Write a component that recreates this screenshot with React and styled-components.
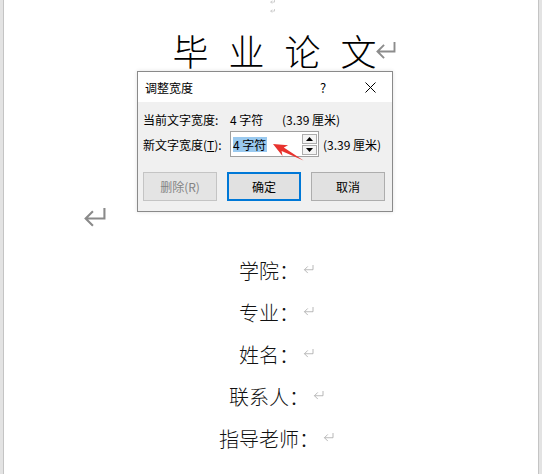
import React from 'react';
import styled, { createGlobalStyle } from 'styled-components';

const GlobalStyle = createGlobalStyle`
  html, body {
    margin: 0;
    padding: 0;
    background: #ffffff;
  }
  body {
    font-family: "Noto Sans CJK SC", "Liberation Sans", sans-serif;
  }
`;

const Window = styled.div`
  position: relative;
  display: flex;
  width: 542px;
  height: 474px;
  overflow: hidden;
  background: #e6e6e6;
`;

const Gutter = styled.div`
  width: 3px;
  background: #e3e3e3;
  border-${(p) => p.side}: 1px solid #c4c4c4;
  box-sizing: border-box;
  width: 4px;
`;

const Page = styled.div`
  flex: 1;
  display: flex;
  flex-direction: column;
  background: #ffffff;
`;

const TinyMarks = styled.div`
  height: 28px;
  display: flex;
  flex-direction: column;
  align-items: center;
  padding-left: 2px;
`;

const TinyRow = styled.div`
  height: ${(p) => p.h}px;
  display: flex;
  align-items: ${(p) => p.align};
`;

const Title = styled.div`
  height: 44px;
  display: flex;
  justify-content: center;
  align-items: center;
  padding-left: 7px;
  font-size: 36px;
  font-weight: 300;
  line-height: 44px;
  word-spacing: 12px;
  color: #000;
`;

const EmptyPara = styled.div`
  height: 177px;
  box-sizing: border-box;
  padding: 136px 0 0 79px;
`;

const Fields = styled.div`
  display: flex;
  flex-direction: column;
  align-items: center;
  padding-right: 4px;
`;

const Field = styled.div`
  height: 42px;
  display: flex;
  align-items: center;
  font-size: 20px;
  font-weight: 300;
  color: #111;
`;

const Mark = styled.svg`
  flex: none;
  margin-left: ${(p) => p.ml || 0}px;
  margin-right: ${(p) => p.mr || 0}px;
  margin-top: ${(p) => p.mt || 0}px;
`;

const ReturnMark = ({ w, h, color = '#8a8a8a', sw = 2, ...rest }) => (
  <Mark width={w} height={h} viewBox="0 0 22 19" {...rest}>
    <path
      d="M20.5 0 V10 H2.5 M9.5 3 L2.5 10 L9.5 17"
      fill="none"
      stroke={color}
      strokeWidth={sw}
    />
  </Mark>
);

/* dialog */

const Dialog = styled.div`
  position: absolute;
  left: 137px;
  top: 71px;
  width: 256px;
  height: 141px;
  box-sizing: border-box;
  border: 1px solid #8a8a8a;
  background: #f0f0f0;
  display: flex;
  flex-direction: column;
  font-size: 12px;
  color: #000;
  box-shadow: 0 0 4px rgba(0, 0, 0, 0.12);
`;

const TitleBar = styled.div`
  height: 30px;
  flex: none;
  display: flex;
  align-items: center;
  background: #ffffff;
  padding-left: 7px;
`;

const TitleText = styled.span`
  flex: 1;
`;

const Help = styled.span`
  width: 8px;
  margin-right: 37px;
  font-size: 13px;
`;

const CloseIcon = styled.svg`
  margin-right: 16px;
`;

const Body = styled.div`
  flex: 1;
  padding: 7px 6px 0 5px;
  display: flex;
  flex-direction: column;
`;

const Row = styled.div`
  height: ${(p) => p.h}px;
  margin-bottom: ${(p) => p.mb || 0}px;
  display: flex;
  align-items: center;
  white-space: nowrap;
`;

const Label = styled.span`
  width: 87px;
  flex: none;
`;

const Value = styled.span`
  width: 52px;
  flex: none;
`;

const SpinBox = styled.div`
  width: 89px;
  height: 26px;
  box-sizing: border-box;
  border: 1px solid #a0a0a0;
  background: #ffffff;
  display: flex;
  align-items: center;
  padding: 0 1px 0 2px;
  margin-right: 4px;
`;

const InputText = styled.div`
  flex: 1;
  display: flex;
  align-items: center;
`;

const Selected = styled.span`
  background: #99c9ef;
  height: 15px;
  line-height: 15px;
  padding-right: 1px;
`;

const Spinner = styled.div`
  width: 15px;
  display: flex;
  flex-direction: column;
  gap: 1px;
`;

const SpinButton = styled.div`
  height: 10px;
  box-sizing: border-box;
  border: 1px solid #adadad;
  background: #f4f4f4;
  display: flex;
  align-items: center;
  justify-content: center;
`;

const Buttons = styled.div`
  display: flex;
  gap: 10px;
  margin-top: 15px;
`;

const Button = styled.div`
  width: 74px;
  height: 29px;
  box-sizing: border-box;
  border: ${(p) => (p.primary ? '2px solid #0078d7' : `1px solid ${p.disabled ? '#c4c4c4' : '#adadad'}`)};
  background: ${(p) => (p.disabled ? '#e4e4e4' : '#e1e1e1')};
  color: ${(p) => (p.disabled ? '#838383' : '#000')};
  display: flex;
  align-items: center;
  justify-content: center;
`;

const Annotation = styled.svg`
  position: absolute;
  left: 0;
  top: 0;
  pointer-events: none;
`;

const Underlined = styled.span`
  text-decoration: underline;
`;

const fields = ['学院：', '专业：', '姓名：', '联系人：', '指导老师：'];

export default function App() {
  return (
    <Window>
      <GlobalStyle />
      <Gutter side="right" />
      <Page>
        <TinyMarks>
          <TinyRow h={4} align="flex-start">
            <ReturnMark w={5} h={4} color="#b5b5b5" sw={3} />
          </TinyRow>
          <TinyRow h={14} align="center">
            <ReturnMark w={5} h={4} color="#b5b5b5" sw={3} />
          </TinyRow>
        </TinyMarks>
        <Title>
          毕 业 论 文
          <ReturnMark w={23} h={18} ml={-2} mr={-21} mt={2} color="#8c8c8c" />
        </Title>
        <EmptyPara>
          <ReturnMark w={23} h={20} color="#8a8a8a" />
        </EmptyPara>
        <Fields>
          {fields.map((f) => (
            <Field key={f}>
              {f}
              <ReturnMark w={11} h={9} ml={4} mr={-15} mt={-2} color="#a3a3a3" sw={1.6} />
            </Field>
          ))}
        </Fields>
      </Page>
      <Gutter side="left" />

      <Dialog>
        <TitleBar>
          <TitleText>调整宽度</TitleText>
          <Help>?</Help>
          <CloseIcon width="11" height="11" viewBox="0 0 11 11">
            <path d="M0.5 0.5 L10.5 10.5 M10.5 0.5 L0.5 10.5" stroke="#000" strokeWidth="1" />
          </CloseIcon>
        </TitleBar>
        <Body>
          <Row h={20} mb={2}>
            <Label>当前文字宽度:</Label>
            <Value>4 字符</Value>
            <span>(3.39 厘米)</span>
          </Row>
          <Row h={26}>
            <Label>
              新文字宽度(<Underlined>T</Underlined>):
            </Label>
            <SpinBox>
              <InputText>
                <Selected>4 字符</Selected>
              </InputText>
              <Spinner>
                <SpinButton>
                  <svg width="7" height="4" viewBox="0 0 7 4">
                    <path d="M0 4 L3.5 0 L7 4 Z" fill="#000" />
                  </svg>
                </SpinButton>
                <SpinButton>
                  <svg width="7" height="4" viewBox="0 0 7 4">
                    <path d="M0 0 L3.5 4 L7 0 Z" fill="#000" />
                  </svg>
                </SpinButton>
              </Spinner>
            </SpinBox>
            <span>(3.39 厘米)</span>
          </Row>
          <Buttons>
            <Button disabled>删除(R)</Button>
            <Button primary>确定</Button>
            <Button>取消</Button>
          </Buttons>
        </Body>
        <Annotation width="256" height="141" viewBox="0 0 256 141">
          <polygon
            points="135,72 150.1,73.3 145.8,75.6 165.5,88.5 143.6,78.9 144.5,83.9"
            fill="#e8332e"
          />
        </Annotation>
      </Dialog>
    </Window>
  );
}
